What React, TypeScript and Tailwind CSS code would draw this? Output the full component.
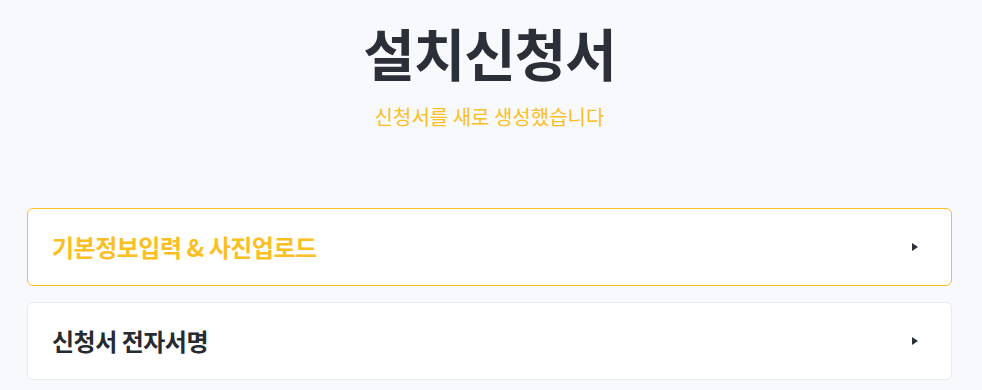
const font = { fontFamily: '"Noto Sans CJK KR", "Noto Sans", sans-serif' }

function Caret() {
  return (
    <svg className="w-[8px] h-[10px] shrink-0" viewBox="0 0 8 10" fill="#2b2f36">
      <path d="M1 1 L7 5 L1 9 Z" />
    </svg>
  )
}

function Section({ label, active }: { label: string; active?: boolean }) {
  return (
    <div
      className={`flex items-center justify-between h-[78px] pl-[24px] pr-[32px] bg-white rounded-[6px] border ${
        active ? 'border-[#fbbf24]' : 'border-[#e8eaef]'
      }`}
    >
      <span className={`text-[24px] font-bold tracking-[-0.5px] ${active ? 'text-[#fbbf24]' : 'text-[#262a31]'}`}>
        {label}
      </span>
      <Caret />
    </div>
  )
}

export default function App() {
  return (
    <div className="min-h-screen bg-[#f8f9fc] pl-[27px] pr-[30px]" style={font}>
      <div className="flex flex-col items-center pt-[14px]">
        <h1 className="text-[56px] leading-[76px] font-bold text-[#2b2f37] tracking-[-1px]">설치신청서</h1>
        <p className="mt-[13px] text-[20px] leading-[28px] text-[#fbbf24]">신청서를 새로 생성했습니다</p>
      </div>
      <div className="mt-[77px] flex flex-col gap-[16px]">
        <Section label="기본정보입력 & 사진업로드" active />
        <Section label="신청서 전자서명" />
      </div>
    </div>
  )
}
